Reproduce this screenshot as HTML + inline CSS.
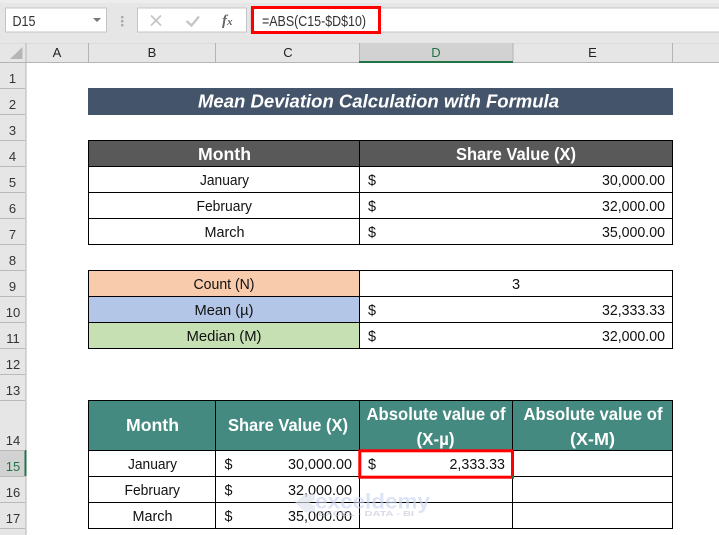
<!DOCTYPE html>
<html><head><meta charset="utf-8"><style>
html,body{margin:0;padding:0;background:#fff;width:719px;height:535px;overflow:hidden}
svg{display:block}
text{font-family:"Liberation Sans",sans-serif}
.c{font-size:14.5px;fill:#111}
.h{font-size:17.5px;font-weight:bold;fill:#fff}
.r{font-size:13px;fill:#333;text-anchor:middle}
.k{font-size:13px;fill:#222;text-anchor:middle}
</style></head><body>
<svg width="719" height="535" viewBox="0 0 719 535" xmlns="http://www.w3.org/2000/svg">
<rect width="719" height="63" fill="#e6e6e6"/>
<rect x="0" y="0" width="719" height="3" fill="#ededed"/>
<rect x="0" y="63" width="26" height="472" fill="#e6e6e6"/>
<!-- name box -->
<rect x="5.5" y="8" width="101" height="24" fill="#fff" stroke="#c4c4c4"/>
<text x="12.5" y="26" font-size="14.5" fill="#333" textLength="23" lengthAdjust="spacingAndGlyphs">D15</text>
<path d="M93 18h8l-4 4z" fill="#777"/>
<rect x="121" y="16" width="2.4" height="2.4" fill="#aaa"/><rect x="121" y="20" width="2.4" height="2.4" fill="#aaa"/><rect x="121" y="24" width="2.4" height="2.4" fill="#aaa"/>
<!-- buttons -->
<rect x="137.5" y="8" width="109" height="24" fill="#fff" stroke="#c4c4c4"/>
<path d="M151 15.5l10 10M161 15.5l-10 10" stroke="#c6c6c6" stroke-width="1.8" fill="none"/>
<path d="M186.500 21l5 4.500l7.500-9" stroke="#c6c6c6" stroke-width="2.400" fill="none"/>
<text x="222" y="25" font-size="15" font-style="italic" font-weight="bold" fill="#666" style="font-family:'Liberation Serif',serif">f<tspan font-size="11">x</tspan></text>
<!-- formula -->
<rect x="251" y="8" width="470" height="24" fill="#fff" stroke="#c4c4c4"/>
<text x="262" y="26" font-size="14.5" fill="#333" textLength="104" lengthAdjust="spacingAndGlyphs">=ABS(C15-$D$10)</text>
<rect x="252.500" y="7.500" width="127" height="25" fill="none" stroke="#f00" stroke-width="3"/>
<!-- column header -->
<rect x="0" y="43" width="719" height="1" fill="#dcdcdc"/>
<rect x="0" y="62" width="719" height="1" fill="#b4b4b4"/>
<path d="M10 59L22.500 47V59z" fill="#b5b5b5"/>
<rect x="359.500" y="43" width="153.500" height="19" fill="#d2d2d2"/>
<rect x="359" y="61" width="154" height="2" fill="#217346"/>
<g fill="#b4b4b4">
<rect x="25.500" y="43" width="1" height="20"/><rect x="88" y="43" width="1" height="19"/><rect x="215" y="43" width="1" height="19"/><rect x="359" y="43" width="1" height="18"/><rect x="512.500" y="43" width="1" height="18"/><rect x="672" y="43" width="1" height="19"/>
</g>
<text class="k" x="57" y="57">A</text><text class="k" x="152" y="57">B</text><text class="k" x="288" y="57">C</text><text class="k" x="436" y="57" style="fill:#217346">D</text><text class="k" x="592.500" y="57">E</text>
<!-- row header -->
<rect x="25.500" y="63" width="1" height="472" fill="#b4b4b4"/>
<rect x="0" y="450" width="26" height="26" fill="#d2d2d2"/>
<rect x="24.500" y="450" width="2" height="26" fill="#217346"/>
<path d="M0 88.500h25M0 114.500h25M0 140.500h25M0 166.500h25M0 192.500h25M0 218.500h25M0 244.500h25M0 270.500h25M0 296.500h25M0 322.500h25M0 348.500h25M0 374.500h25M0 400.500h25M0 450.500h25M0 476.500h25M0 502.500h25M0 528.500h25" stroke="#b9b9b9" fill="none"/>
<text class="r" x="12.500" y="83">1</text><text class="r" x="12.500" y="109">2</text><text class="r" x="12.500" y="135">3</text><text class="r" x="12.500" y="161">4</text><text class="r" x="12.500" y="187">5</text><text class="r" x="12.500" y="213">6</text><text class="r" x="12.500" y="239">7</text><text class="r" x="12.500" y="265">8</text><text class="r" x="12.500" y="291">9</text><text class="r" x="13" y="317">10</text><text class="r" x="13" y="343">11</text><text class="r" x="13" y="369">12</text><text class="r" x="13" y="395">13</text><text class="r" x="13" y="445">14</text><text class="r" x="13" y="471" style="fill:#217346">15</text><text class="r" x="13" y="497">16</text><text class="r" x="13" y="523">17</text>
<!-- title -->
<rect x="88" y="88" width="585" height="27" fill="#44546a"/>
<text x="198" y="107.500" font-size="18.5" font-weight="bold" font-style="italic" fill="#fff" textLength="361" lengthAdjust="spacingAndGlyphs">Mean Deviation Calculation with Formula</text>
<!-- table 1 -->
<rect x="88" y="140" width="585" height="26" fill="#595959"/>
<path d="M88.500 140.500H672.500V244.500H88.500ZM88 166.500H673M88 192.500H673M88 218.500H673M359.500 140V245" fill="none" stroke="#000"/>
<text class="h" x="198" y="160" textLength="53" lengthAdjust="spacingAndGlyphs">Month</text>
<text class="h" x="456" y="160" textLength="120" lengthAdjust="spacingAndGlyphs">Share Value (X)</text>
<text class="c" x="200" y="185" textLength="49" lengthAdjust="spacingAndGlyphs">January</text>
<text class="c" x="196.500" y="211" textLength="55.500" lengthAdjust="spacingAndGlyphs">February</text>
<text class="c" x="204.500" y="237" textLength="40" lengthAdjust="spacingAndGlyphs">March</text>
<text class="c" x="368" y="185" textLength="8" lengthAdjust="spacingAndGlyphs">$</text><text class="c" x="368" y="211" textLength="8" lengthAdjust="spacingAndGlyphs">$</text><text class="c" x="368" y="237" textLength="8" lengthAdjust="spacingAndGlyphs">$</text>
<text class="c" x="602" y="185" textLength="63" lengthAdjust="spacingAndGlyphs">30,000.00</text>
<text class="c" x="602" y="211" textLength="63" lengthAdjust="spacingAndGlyphs">32,000.00</text>
<text class="c" x="602" y="237" textLength="63" lengthAdjust="spacingAndGlyphs">35,000.00</text>
<!-- table 2 -->
<rect x="88" y="270" width="272" height="26" fill="#f8cbad"/>
<rect x="88" y="296" width="272" height="26" fill="#b4c6e7"/>
<rect x="88" y="322" width="272" height="26" fill="#c6e0b4"/>
<path d="M88.500 270.500H672.500V348.500H88.500ZM88 296.500H673M88 322.500H673M359.500 270V349" fill="none" stroke="#000"/>
<text class="c" x="193.500" y="289" textLength="61" lengthAdjust="spacingAndGlyphs">Count (N)</text>
<text class="c" x="194.500" y="315" textLength="59" lengthAdjust="spacingAndGlyphs">Mean (µ)</text>
<text class="c" x="186.500" y="341" textLength="75" lengthAdjust="spacingAndGlyphs">Median (M)</text>
<text class="c" x="512" y="289">3</text>
<text class="c" x="368" y="315" textLength="8" lengthAdjust="spacingAndGlyphs">$</text><text class="c" x="368" y="341" textLength="8" lengthAdjust="spacingAndGlyphs">$</text>
<text class="c" x="602" y="315" textLength="63" lengthAdjust="spacingAndGlyphs">32,333.33</text>
<text class="c" x="602" y="341" textLength="63" lengthAdjust="spacingAndGlyphs">32,000.00</text>
<!-- table 3 -->
<rect x="88" y="400" width="585" height="50" fill="#458a80"/>
<path d="M88.500 400.500H672.500V528.500H88.500ZM88 450.500H673M88 476.500H673M88 502.500H673M215.500 400V529M359.500 400V529M512.500 400V529" fill="none" stroke="#000"/>
<text class="h" x="126" y="431" textLength="53" lengthAdjust="spacingAndGlyphs">Month</text>
<text class="h" x="228" y="431" textLength="120" lengthAdjust="spacingAndGlyphs">Share Value (X)</text>
<text class="h" x="366.500" y="420" textLength="139" lengthAdjust="spacingAndGlyphs">Absolute value of</text>
<text class="h" x="416.500" y="445" textLength="38" lengthAdjust="spacingAndGlyphs">(X-µ)</text>
<text class="h" x="523.500" y="420" textLength="139" lengthAdjust="spacingAndGlyphs">Absolute value of</text>
<text class="h" x="570" y="445" textLength="45" lengthAdjust="spacingAndGlyphs">(X-M)</text>
<text class="c" x="128" y="469" textLength="49" lengthAdjust="spacingAndGlyphs">January</text>
<text class="c" x="124.500" y="495" textLength="55.500" lengthAdjust="spacingAndGlyphs">February</text>
<text class="c" x="132.500" y="521" textLength="40" lengthAdjust="spacingAndGlyphs">March</text>
<text class="c" x="224.500" y="469" textLength="8" lengthAdjust="spacingAndGlyphs">$</text><text class="c" x="224.500" y="495" textLength="8" lengthAdjust="spacingAndGlyphs">$</text><text class="c" x="224.500" y="521" textLength="8" lengthAdjust="spacingAndGlyphs">$</text>
<text class="c" x="288" y="469" textLength="64" lengthAdjust="spacingAndGlyphs">30,000.00</text>
<text class="c" x="288" y="495" textLength="64" lengthAdjust="spacingAndGlyphs">32,000.00</text>
<text class="c" x="288" y="521" textLength="64" lengthAdjust="spacingAndGlyphs">35,000.00</text>
<text class="c" x="368" y="469" textLength="8" lengthAdjust="spacingAndGlyphs">$</text>
<text class="c" x="449.500" y="469" textLength="55.500" lengthAdjust="spacingAndGlyphs">2,333.33</text>
<rect x="359.800" y="450.800" width="152.700" height="26.400" fill="none" stroke="#f00" stroke-width="3"/>
<rect x="511" y="475.500" width="3" height="3" fill="#217346"/>
<!-- watermark -->
<g opacity=".65">
<path d="M295 503l10-9h10v6l-6 3l6 3v6h-10z" fill="#dfe3ef"/>
<text x="315" y="508.500" font-size="21" font-weight="bold" fill="#ccd6f3" textLength="115" lengthAdjust="spacingAndGlyphs">exceldemy</text>
<text x="318" y="516" font-size="7.500" font-weight="bold" fill="#c4c8d6" textLength="96" lengthAdjust="spacingAndGlyphs">EXCEL - DATA - BI</text>
</g>
</svg>
</body></html>
